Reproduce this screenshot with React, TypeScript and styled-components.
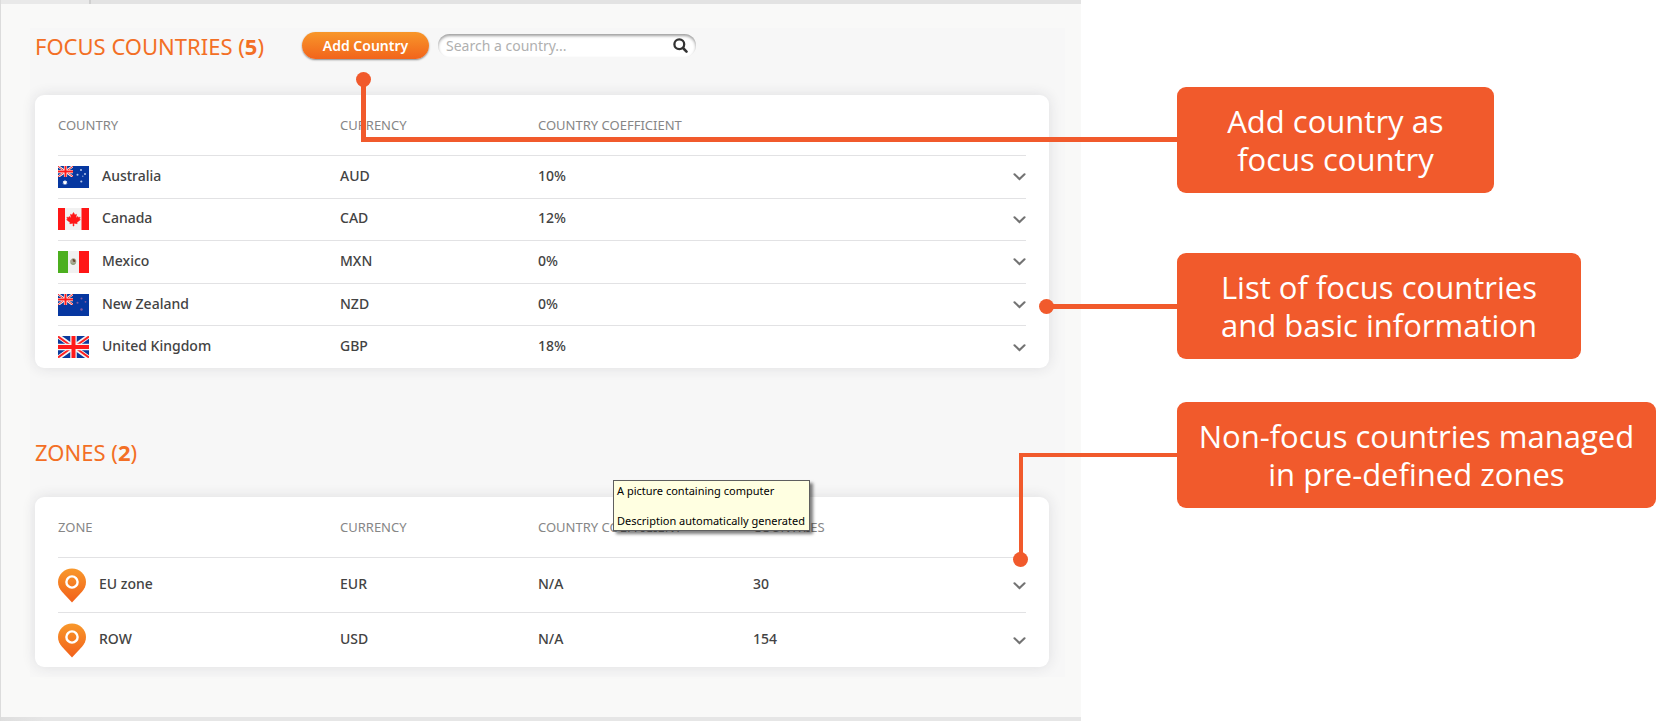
import React, { useId } from 'react';
import styled, { createGlobalStyle, css } from 'styled-components';

const ACCENT = '#f15a2c';

const GlobalStyle = createGlobalStyle`
  *, *::before, *::after { box-sizing: border-box; }
  body {
    margin: 0;
    background: #ffffff;
    font-family: "Noto Sans", "Open Sans", sans-serif;
    color: #434343;
  }
`;

/* ---------- page frame ---------- */

const Page = styled.div`
  display: flex;
  align-items: stretch;
  min-height: 100vh;
  overflow-x: clip;
`;

const AppPanel = styled.main`
  flex: 0 0 65%;
  display: flex;
  flex-direction: column;
  border-left: 1px solid #dcdcdc;
  background: #f9f9f8;
`;

const TopStrip = styled.div`
  display: flex;
  height: 4px;
  background: #e3e3e3;
`;

const StripTab = styled.div`
  width: 90px;
  background: #e9e9e9;
  border-right: 2px solid #d0d0d0;
`;

const BottomStrip = styled.div`
  height: 4px;
  margin-top: auto;
  background: linear-gradient(to right, #dedede, #e6e6e6 4%, #e6e6e6);
`;

const Content = styled.div`
  margin: 24px 16px 40px 29px;
  padding: 0 16px 10px 5px;
  background: #f7f7f7;
`;

/* ---------- headings and toolbar ---------- */

const Toolbar = styled.div<{ $above?: number; $below: number }>`
  display: flex;
  align-items: center;
  height: 35px;
  margin: 0 0 ${(p) => p.$below}px;
  padding: 0;
  ${(p) => p.$above && `margin-top: ${p.$above}px;`}
`;

const Title = styled.h1`
  margin: 0;
  font-size: 22px;
  line-height: 32px;
  font-weight: 400;
  color: #f36f25;
  white-space: nowrap;
`;

const AddButton = styled.button`
  width: 127px;
  height: 27px;
  margin: 0 9px 0 auto;
  padding: 0;
  border: 0;
  border-radius: 14px;
  background: linear-gradient(#f8972a, #f2641b);
  box-shadow: 0 1px 2px rgba(0, 0, 0, 0.45);
  color: #ffffff;
  font: 600 14px/26px "Noto Sans", sans-serif;
  cursor: pointer;
`;

const TitleAndAction = styled.div`
  display: flex;
  align-items: center;
  flex: 0 0 403px;
`;

const SearchField = styled.label`
  display: flex;
  align-items: center;
  width: 258px;
  height: 23px;
  padding: 0 8px;
  border-radius: 12px;
  background: #ffffff;
  box-shadow: inset 0 2px 3px rgba(0, 0, 0, 0.38);
`;

const SearchInput = styled.input`
  flex: 1;
  min-width: 0;
  padding: 0;
  border: 0;
  outline: 0;
  background: transparent;
  font: 400 14px/20px "Noto Sans", sans-serif;
  color: #434343;
  &::placeholder { color: #b0b0b0; opacity: 1; }
`;

/* ---------- cards and tables ---------- */

const Card = styled.section`
  padding: 0 23px;
  border-radius: 9px;
  background: #ffffff;
  box-shadow: 0 0 14px rgba(40, 40, 60, 0.12);
`;

const Table = styled.table<{ $height: number }>`
  width: 100%;
  height: ${(p) => p.$height}px;
  table-layout: fixed;
  border-collapse: separate;
  border-spacing: 0;
`;

const HeadCell = styled.th<{ $width?: number }>`
  width: ${(p) => (p.$width ? `${p.$width}px` : 'auto')};
  height: 60px;
  padding: 0;
  text-align: left;
  vertical-align: middle;
  font-size: 13px;
  line-height: 18px;
  font-weight: 400;
  color: #868686;
  white-space: nowrap;
`;

const Cell = styled.td`
  padding: 0;
  border-top: 1px solid #e2e2e4;
  vertical-align: middle;
  font-size: 14px;
  line-height: 20px;
  font-weight: 500;
  white-space: nowrap;
`;

const TextCell = styled(Cell)`
  padding-bottom: 2px;
`;

const NameGroup = styled.div<{ $gap: number }>`
  display: flex;
  align-items: center;
  gap: ${(p) => p.$gap}px;
`;

const Name = styled.span`
  padding-bottom: 2px;
`;

const ExpandButton = styled.button`
  display: flex;
  align-items: center;
  justify-content: flex-end;
  width: 24px;
  height: 24px;
  margin-left: auto;
  padding: 0;
  border: 0;
  background: transparent;
  cursor: pointer;
`;

const Drawing = styled.svg`
  display: block;
  flex: none;
`;

/* ---------- tooltip ---------- */

const ZonesCard = styled(Card)`
  position: relative;
`;

const Tooltip = styled.div`
  position: absolute;
  top: -17px;
  left: 578px;
  width: 197px;
  padding: 2px 0 2px 3px;
  border: 1px solid #5f5f5f;
  background: #ffffe1;
  box-shadow: 3px 3px 3px rgba(0, 0, 0, 0.5);
  font-size: 11px;
  line-height: 15px;
  color: #000000;
  white-space: nowrap;
`;

const TooltipLine = styled.p`
  margin: 0;
  & + & { margin-top: 15px; }
`;

/* ---------- annotations ---------- */

const Annotations = styled.aside`
  flex: 1;
  min-width: 0;
  padding: 87px 0 0 96px;
`;

const Callout = styled.div<{ $width: number; $gap?: number }>`
  position: relative;
  display: flex;
  align-items: center;
  justify-content: center;
  width: ${(p) => p.$width}px;
  height: 106px;
  margin-top: ${(p) => p.$gap ?? 0}px;
  border-radius: 9px;
  background: ${ACCENT};
  color: #ffffff;
  font-family: "Open Sans", "Noto Sans", sans-serif;
  font-size: 31px;
  line-height: 38px;
  text-align: center;
  white-space: nowrap;
`;

const shapes = {
  add: css`
    top: -8px;
    width: 816px;
    height: 63px;
    border-left: 5px solid ${ACCENT};
    border-bottom: 5px solid ${ACCENT};
    &::after { left: -10px; top: -7px; }
  `,
  list: css`
    top: 51px;
    width: 131px;
    height: 5px;
    background: ${ACCENT};
    &::after { left: -7px; top: -5px; }
  `,
  zones: css`
    top: 51px;
    width: 158px;
    height: 107px;
    border-left: 4px solid ${ACCENT};
    border-top: 4px solid ${ACCENT};
    &::after { left: -10px; bottom: -7px; }
  `,
};

const Connector = styled.span<{ $shape: keyof typeof shapes }>`
  position: absolute;
  right: 100%;
  pointer-events: none;
  &::after {
    content: '';
    position: absolute;
    width: 15px;
    height: 15px;
    border-radius: 50%;
    background: ${ACCENT};
  }
  ${(p) => shapes[p.$shape]}
`;

/* ---------- drawings ---------- */

const Chevron = () => (
  <Drawing width="13" height="9" viewBox="0 0 13 9" aria-hidden="true">
    <path d="M1.5 2.300 6.500 7l5-4.700" fill="none" stroke="#737373" strokeWidth="2.100" strokeLinecap="round" />
  </Drawing>
);

const Magnifier = () => (
  <Drawing width="15" height="15" viewBox="0 0 15 15" aria-hidden="true">
    <circle cx="6.300" cy="6.200" r="4.900" fill="none" stroke="#333333" strokeWidth="2.300" />
    <path d="m10 10 3.500 3.600" stroke="#333333" strokeWidth="2.600" strokeLinecap="round" />
  </Drawing>
);

const Pin = () => {
  const id = useId();
  return (
    <Drawing width="28" height="35" viewBox="0 0 28 35" aria-hidden="true">
      <defs>
        <linearGradient id={id} x1="0" y1="0" x2="0" y2="1">
          <stop offset="0" stopColor="#f8982b" />
          <stop offset="1" stopColor="#f2601a" />
        </linearGradient>
      </defs>
      <path d="M14 .5C6.400.5 0 6.400 0 14c0 3.800 1.500 6.900 4 9.700L14 34.500l10-10.800c2.500-2.800 4-5.900 4-9.700C28 6.400 21.600.5 14 .5Z" fill={`url(#${id})`} />
      <circle cx="14" cy="14" r="5.600" fill="none" stroke="#ffffff" strokeWidth="2.400" />
    </Drawing>
  );
};

const UnionJack = ({ width, height }: { width: number; height: number }) => (
  <svg width={width} height={height} viewBox="0 0 62 44" preserveAspectRatio="none">
    <rect width="62" height="44" fill="#0a3a9c" />
    <path d="M0 0 62 44M62 0 0 44" stroke="#f4f4f4" strokeWidth="9" />
    <path d="M0 1 28 21M62 1 34 21M0 43l28-20M62 43 34 23" stroke="#ff2020" strokeWidth="4" />
    <path d="M31 0v44M0 22h62" stroke="#f4f4f4" strokeWidth="13" />
    <path d="M31 0v44M0 22h62" stroke="#ff1a1a" strokeWidth="8" />
  </svg>
);

type FlagCode = 'au' | 'ca' | 'mx' | 'nz' | 'gb';

const flagArt: Record<FlagCode, React.ReactNode> = {
  au: (
    <>
      <rect width="31" height="22" fill="#0637a0" />
      <UnionJack width={15} height={11} />
      <path d="m7 13.800.700 1.400 1.500-.300-.700 1.400 1.200.900-1.500.300v1.500L7 18l-1.200 1v-1.500l-1.500-.300 1.200-.900-.700-1.400 1.500.300Z" fill="#ffffff" />
      <g fill="#b9c8ea">
        <circle cx="23" cy="4" r="1" />
        <circle cx="19.500" cy="8.800" r="1" />
        <circle cx="27" cy="8" r="1" />
        <circle cx="23.300" cy="15.500" r="1.100" />
        <circle cx="24.800" cy="10.200" r=".6" />
      </g>
    </>
  ),
  ca: (
    <>
      <rect width="31" height="22" fill="#f1f1f1" />
      <path d="M0 0h7v22H0zM23.500 0H31v22h-7.500z" fill="#ff1616" />
      <path d="m15.500 4.500 1.500 2.500 1.500-.700-.5 3.700 1.800-1.600.5 1.100 1.900-.3-.7 1.900.9.600-3.500 2.700.3 1.300-3.300-.5.100 2.800h-1l.1-2.800-3.300.5.3-1.300-3.500-2.700.9-.6-.7-1.900 1.900.3.500-1.100L13 10l-.5-3.700 1.500.7Z" fill="#ff1616" stroke="#ff1616" strokeWidth=".5" />
    </>
  ),
  mx: (
    <>
      <rect width="31" height="22" fill="#f1f1f1" />
      <path d="M0 0h10v22H0z" fill="#4caf1f" />
      <path d="M21 0h10v22H21z" fill="#ff1616" />
      <path d="M12 9.800c1-.8 1.500-2.300 3.200-2.500 2-.2 3.200 1.500 3.100 3.300-.1 2-1.300 3.400-3.100 3.400-1.500 0-2.700-1-2.900-2.500Z" fill="#aaa893" />
      <path d="M14.500 8.200c1.500-.6 3 .5 2.900 2.200-.8 1-2 .9-2.400-.1Z" fill="#6b4a33" />
      <path d="M12.600 11.800c1 1.700 3.500 2 5 .2" fill="none" stroke="#7f9f70" strokeWidth=".9" />
    </>
  ),
  nz: (
    <>
      <rect width="31" height="22" fill="#0637a0" />
      <UnionJack width={15} height={11} />
      <g fill="#8a5a9c">
        <circle cx="23.500" cy="4.500" r="1" />
        <circle cx="19.500" cy="8.800" r="1" />
        <circle cx="27.500" cy="7.800" r=".9" />
        <circle cx="23.500" cy="15.500" r="1.200" />
      </g>
    </>
  ),
  gb: <UnionJack width={31} height={22} />,
};

const Flag = ({ code }: { code: FlagCode }) => (
  <Drawing width="31" height="22" viewBox="0 0 31 22" aria-hidden="true">
    {flagArt[code]}
  </Drawing>
);

/* ---------- data ---------- */

const countries: { name: string; code: FlagCode; currency: string; coefficient: string }[] = [
  { name: 'Australia', code: 'au', currency: 'AUD', coefficient: '10%' },
  { name: 'Canada', code: 'ca', currency: 'CAD', coefficient: '12%' },
  { name: 'Mexico', code: 'mx', currency: 'MXN', coefficient: '0%' },
  { name: 'New Zealand', code: 'nz', currency: 'NZD', coefficient: '0%' },
  { name: 'United Kingdom', code: 'gb', currency: 'GBP', coefficient: '18%' },
];

const zones = [
  { name: 'EU zone', currency: 'EUR', coefficient: 'N/A', members: 30 },
  { name: 'ROW', currency: 'USD', coefficient: 'N/A', members: 154 },
];

export default function App() {
  return (
    <>
      <GlobalStyle />
      <Page>
        <AppPanel>
          <TopStrip>
            <StripTab />
          </TopStrip>
          <Content>
            <Toolbar $below={32}>
              <TitleAndAction>
                <Title>
                  FOCUS COUNTRIES (<b>{countries.length}</b>)
                </Title>
                <AddButton type="button">Add Country</AddButton>
              </TitleAndAction>
              <SearchField>
                <SearchInput type="text" aria-label="Search a country" placeholder="Search a country..." />
                <Magnifier />
              </SearchField>
            </Toolbar>
            <Card>
              <Table $height={273}>
                <thead>
                  <tr>
                    <HeadCell $width={282}>COUNTRY</HeadCell>
                    <HeadCell $width={198}>CURRENCY</HeadCell>
                    <HeadCell>COUNTRY COEFFICIENT</HeadCell>
                    <HeadCell $width={40} aria-label="Details" />
                  </tr>
                </thead>
                <tbody>
                  {countries.map((c) => (
                    <tr key={c.code}>
                      <Cell>
                        <NameGroup $gap={13}>
                          <Flag code={c.code} />
                          <Name>{c.name}</Name>
                        </NameGroup>
                      </Cell>
                      <TextCell>{c.currency}</TextCell>
                      <TextCell>{c.coefficient}</TextCell>
                      <Cell>
                        <ExpandButton type="button" aria-label={`Expand ${c.name}`}>
                          <Chevron />
                        </ExpandButton>
                      </Cell>
                    </tr>
                  ))}
                </tbody>
              </Table>
            </Card>
            <Toolbar $above={66} $below={28}>
              <Title as="h2">
                ZONES (<b>{zones.length}</b>)
              </Title>
            </Toolbar>
            <ZonesCard>
              <Table $height={170}>
                <thead>
                  <tr>
                    <HeadCell $width={282}>ZONE</HeadCell>
                    <HeadCell $width={198}>CURRENCY</HeadCell>
                    <HeadCell $width={215}>COUNTRY COEFFICIENT</HeadCell>
                    <HeadCell>COUNTRIES</HeadCell>
                    <HeadCell $width={40} aria-label="Details" />
                  </tr>
                </thead>
                <tbody>
                  {zones.map((z) => (
                    <tr key={z.name}>
                      <Cell>
                        <NameGroup $gap={13}>
                          <Pin />
                          <Name>{z.name}</Name>
                        </NameGroup>
                      </Cell>
                      <TextCell>{z.currency}</TextCell>
                      <TextCell>{z.coefficient}</TextCell>
                      <TextCell>{z.members}</TextCell>
                      <Cell>
                        <ExpandButton type="button" aria-label={`Expand ${z.name}`}>
                          <Chevron />
                        </ExpandButton>
                      </Cell>
                    </tr>
                  ))}
                </tbody>
              </Table>
              <Tooltip role="tooltip">
                <TooltipLine>A picture containing computer</TooltipLine>
                <TooltipLine>Description automatically generated</TooltipLine>
              </Tooltip>
            </ZonesCard>
          </Content>
          <BottomStrip />
        </AppPanel>
        <Annotations>
          <Callout $width={317}>
            <Connector $shape="add" />
            Add country as
            <br />
            focus country
          </Callout>
          <Callout $width={404} $gap={60}>
            <Connector $shape="list" />
            List of focus countries
            <br />
            and basic information
          </Callout>
          <Callout $width={479} $gap={43}>
            <Connector $shape="zones" />
            Non-focus countries managed
            <br />
            in pre-defined zones
          </Callout>
        </Annotations>
      </Page>
    </>
  );
}
